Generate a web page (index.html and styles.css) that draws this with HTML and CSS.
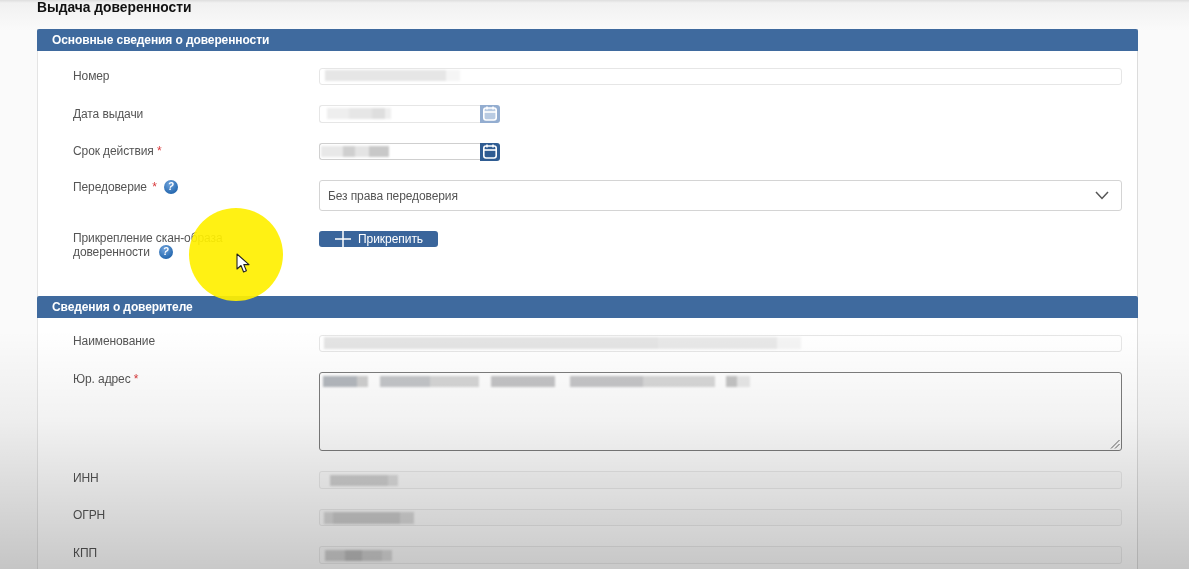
FILE: index.html
```html
<!DOCTYPE html>
<html lang="ru">
<head>
<meta charset="utf-8">
<title>Выдача доверенности</title>
<link rel="stylesheet" href="styles.css">
</head>
<body>
<div class="page">
  <h1 class="title">Выдача доверенности</h1>

  <section class="panel">
    <h2 class="panel-head">Основные сведения о доверенности</h2>
    <div class="panel-body panel-body--first">
      <div class="row row--inline">
        <div class="label">Номер</div>
        <div class="field"><span class="redact r-number"></span></div>
      </div>
      <div class="row row--inline">
        <div class="label">Дата выдачи</div>
        <div class="date">
          <div class="field field--date"><span class="redact r-issued"></span></div>
          <button class="cal cal--muted" type="button" aria-label="Календарь">
            <svg viewBox="0 0 20 18" width="20" height="18"><rect x="3.8" y="3" width="12.4" height="12" rx="2.2" fill="#b9cbe2" stroke="#fff" stroke-width="1.6"/><path d="M3.8 7h12.4" stroke="#fff" stroke-width="1.6" fill="none"/><path d="M7 1.5v3M13 1.5v3" stroke="#fff" stroke-width="1.5" fill="none"/></svg>
          </button>
        </div>
      </div>
      <div class="row row--inline">
        <div class="label">Срок действия <span class="req">*</span></div>
        <div class="date">
          <div class="field field--date field--strong"><span class="redact r-term"></span></div>
          <button class="cal" type="button" aria-label="Календарь">
            <svg viewBox="0 0 20 18" width="20" height="18"><rect x="3.8" y="3" width="12.4" height="12" rx="2.2" fill="none" stroke="#fff" stroke-width="1.6"/><path d="M3.8 7h12.4" stroke="#fff" stroke-width="1.6" fill="none"/><path d="M7 1.5v3M13 1.5v3" stroke="#fff" stroke-width="1.5" fill="none"/></svg>
          </button>
        </div>
      </div>
      <div class="row">
        <div class="label">Передоверие <span class="req req--gap">*</span><span class="help help--a">?</span></div>
        <div class="select">
          <span>Без права передоверия</span>
          <svg class="chev" viewBox="0 0 14 9" width="14" height="9"><path d="M1 1l6 6.5L13 1" fill="none" stroke="#555" stroke-width="1.5"/></svg>
        </div>
      </div>
      <div class="row">
        <div class="label">Прикрепление скан-образа<br>доверенности<span class="help help--b">?</span></div>
        <div>
          <button class="attach" type="button">
            <svg viewBox="0 0 16 16" width="16" height="16"><path d="M0 8h16M8 0v16" stroke="#fff" stroke-width="1.5" fill="none"/></svg>
            <span>Прикрепить</span>
          </button>
        </div>
      </div>
    </div>
  </section>

  <section class="panel">
    <h2 class="panel-head">Сведения о доверителе</h2>
    <div class="panel-body panel-body--second">
      <div class="row">
        <div class="label">Наименование</div>
        <div class="field"><span class="redact r-name"></span></div>
      </div>
      <div class="row">
        <div class="label">Юр. адрес <span class="req">*</span></div>
        <div class="area">
          <span class="redact r-address"></span>
          <svg class="grip" viewBox="0 0 10 10" width="10" height="10"><path d="M1 9.5L9.5 1M5 9.5L9.5 5" stroke="#666" stroke-width="1" fill="none"/></svg>
        </div>
      </div>
      <div class="row">
        <div class="label">ИНН</div>
        <div class="field field--off"><span class="redact r-inn"></span></div>
      </div>
      <div class="row">
        <div class="label">ОГРН</div>
        <div class="field field--off"><span class="redact r-ogrn"></span></div>
      </div>
      <div class="row">
        <div class="label">КПП</div>
        <div class="field field--off"><span class="redact r-kpp"></span></div>
      </div>
    </div>
  </section>

  <div class="shade"></div>
  <div class="spot"></div>
  <svg class="pointer" viewBox="0 0 14 21" width="14" height="21"><path d="M1 1v15l4-3.5 2.6 6.5 2.8-1.2-2.6-6.2H13z" fill="#fff" stroke="#222" stroke-width="1.1" stroke-linejoin="round"/></svg>
</div>
</body>
</html>
```
FILE: styles.css
```css
* { box-sizing: border-box; }
html, body { margin: 0; height: 569px; overflow: hidden; background: #fafafa; }
body { font-family: "Liberation Sans", Arial, sans-serif; font-size: 12px; letter-spacing: -0.1px; color: #555; }

.page {
  position: relative;
  height: 569px;
  padding: 0 51px 0 37px;
  overflow: hidden;
  background: linear-gradient(#dedede 0, #f1f1f1 3px, #fafafa 30px);
  filter: blur(0.4px);
}

.title {
  margin: 0;
  height: 29px;
  padding-top: 0.5px;
  font-size: 13.8px;
  line-height: 14px;
  font-weight: 700;
  letter-spacing: 0;
  color: #111;
}

.panel { background: #fff; border-right: 1px solid #dcdcdc; border-left: 1px solid #e4e4e4; }
.panel-head {
  margin: 0 -1px 0 -1px;
  height: 22px;
  padding-left: 15px;
  background: #3f6a9e;
  border-radius: 2px 2px 0 0;
  color: #fff;
  font-size: 12px;
  line-height: 22px;
  font-weight: 700;
}
.panel-body { display: flex; flex-direction: column; gap: 20px; padding-right: 15px; }
.panel-body--first { height: 245px; padding-top: 16.5px; }
.panel-body--second { height: 260px; padding-top: 16.5px; }

.row { display: grid; grid-template-columns: 246px 1fr; padding-left: 35px; }
.label { line-height: 14px; margin-top: -0.5px; }
.row--inline .label { padding-top: 2px; }
.req { color: #d8393b; }
.req--gap { margin-left: 2px; }

.help {
  display: inline-block;
  width: 14px;
  height: 14px;
  margin-left: 7px;
  border-radius: 50%;
  background: radial-gradient(circle at 40% 30%, #6fa3dc, #2467ae 75%);
  color: #fff;
  font-size: 10px;
  font-weight: 700;
  font-style: italic;
  line-height: 14px;
  text-align: center;
  vertical-align: top;
}
.help--b { margin-left: 9px; }

.field, .area, .select {
  position: relative;
  border: 1px solid #e6e6e6;
  border-radius: 3px;
  background: #fff;
}
.field { height: 17.5px; }
.field--date { flex: 1; border-radius: 3px 0 0 3px; border-right: 0; }
.field--strong { border-color: #cfcfcf; }
.field--off { background: rgba(0,0,0,0.01); border-color: rgba(0,0,0,0.07); }

.date { display: flex; width: 181px; height: 17.5px; }
.cal {
  width: 20px;
  height: 18px;
  padding: 0;
  border: 0;
  border-radius: 0 3px 3px 0;
  background: #2f5c92;
}
.cal svg { display: block; }
.cal--muted { background: #93add0; }

.select {
  display: flex;
  align-items: center;
  justify-content: space-between;
  height: 31px;
  padding: 0 12px 0 8px;
  border-color: #d4d4d4;
}

.area { height: 79px; border: 1.5px solid #7d7d7d; background: transparent; }
.area .redact { left: 3px; top: 3px; }
.grip { position: absolute; right: 1px; bottom: 1px; }

.attach {
  display: flex;
  align-items: center;
  gap: 7px;
  width: 119px;
  height: 16px;
  padding: 0 0 0 16px;
  border: 0;
  border-radius: 3px;
  background: #3a659b;
  color: #fff;
  font-family: inherit;
  font-size: 12px;
  letter-spacing: -0.05px;
}
.attach svg { display: block; }

.redact { position: absolute; display: block; height: 11px; filter: blur(1.2px); }
.r-number { left: 5px; top: 1px; width: 135px; background: linear-gradient(90deg, #e6e6e6 0 90%, #f5f5f5 90%); }
.r-issued { left: 7px; top: 2px; width: 64px; background: linear-gradient(90deg, #eee 0 35%, #e6e6e6 35% 70%, #dedede 70% 90%, #eee 90%); }
.r-term { left: 1px; top: 2px; width: 68px; background: linear-gradient(90deg, #e8e8e8 0 33%, #cfcfcf 33% 50%, #e4e4e4 50% 70%, #c8c8c8 70%); }
.r-name { left: 4px; top: 1px; width: 477px; height: 12px; background: linear-gradient(90deg, #e4e4e4 0 70%, #e8e8e8 70% 95%, #f4f4f4 95%); }
.r-address { width: 427px; height: 11px; background: linear-gradient(90deg,
  #b4b8be 0 8%, #cfcfcf 8% 10.5%, #fff 10.5% 13.3%,
  #c4c6c9 13.3% 25%, #d6d6d6 25% 36.5%, #fff 36.5% 39.3%,
  #c4c4c6 39.3% 54.3%, #fff 54.3% 57.8%,
  #c6c6c8 57.8% 75%, #d8d8d8 75% 91.8%, #fff 91.8% 94.3%, #c4c4c4 94.3% 97%, #e8e8e8 97%); }
.r-inn { left: 10px; top: 3px; width: 68px; background: linear-gradient(90deg, #d0d0d0 0 85%, #dedede 85%); }
.r-ogrn { left: 4px; top: 2px; width: 90px; height: 12px; background: linear-gradient(90deg, #d9d9d9 0 10%, #cbcbcb 10% 85%, #dadada 85%); }
.r-kpp { left: 5px; top: 3px; width: 67px; background: linear-gradient(90deg, #d0d0d0 0 30%, #bcbcbc 30% 55%, #cdcdcd 55% 85%, #dadada 85%); }

.shade {
  position: absolute;
  inset: 0;
  background: linear-gradient(rgba(0,0,0,0) 330px, rgba(0,0,0,0.05) 420px, rgba(0,0,0,0.21) 569px);
  pointer-events: none;
}
.spot {
  position: absolute;
  left: 189px;
  top: 208px;
  width: 94px;
  height: 93px;
  border-radius: 50%;
  background: #fff000;
  opacity: 0.92;
}
.pointer { position: absolute; left: 236px; top: 253px; }
```
